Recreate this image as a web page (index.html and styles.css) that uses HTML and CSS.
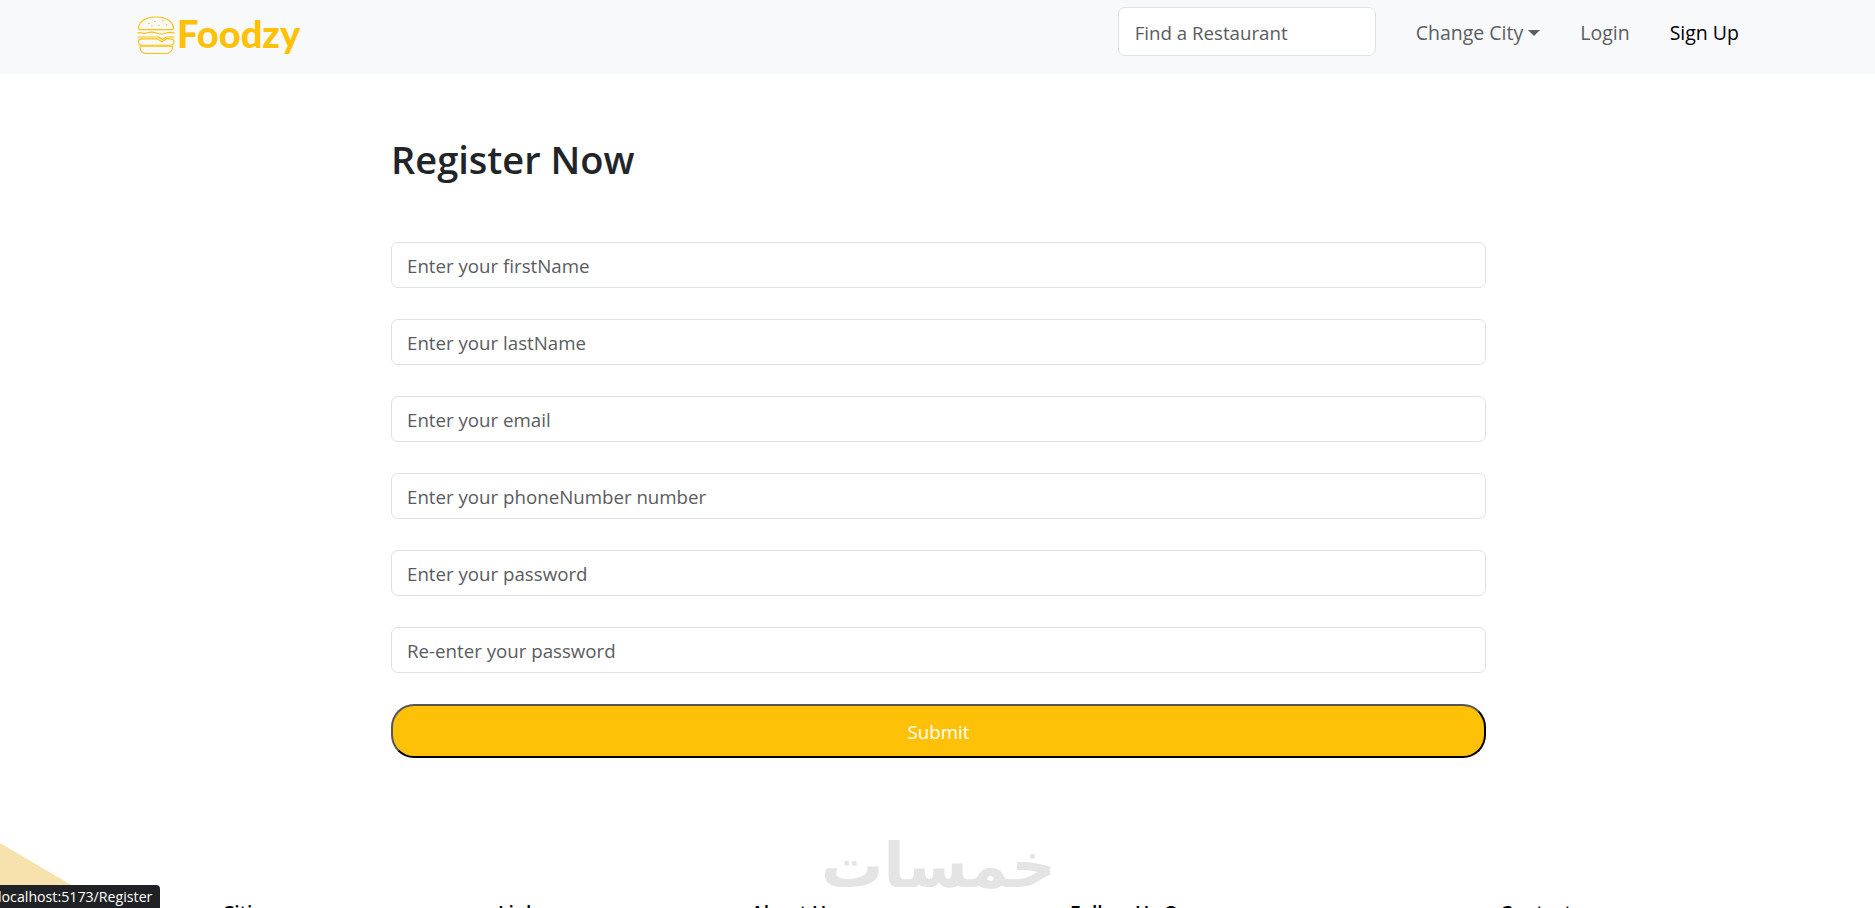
FILE: index.html
```html
<!DOCTYPE html>
<html lang="en">
<head>
<meta charset="utf-8">
<title>Foodzy</title>
<link rel="stylesheet" href="styles.css">
</head>
<body>
<header class="navbar">
  <a class="brand" href="#">
    <svg class="burger" viewBox="0 0 40 40" fill="none" stroke="#ffc107" stroke-width="1.2" stroke-linecap="round" stroke-linejoin="round">
      <path d="M1.500 12.500C2 5.500 9 1 19.500 1S37 5.500 37.500 12.500C37.500 13.500 37 14 36 14H3C2 14 1.500 13.500 1.500 12.500Z"/>
      <path d="M12 7.500h.6M18 5.500h.6M26 5h.6M15 10h.6M22 9.500h.6M30 9h.6"/>
      <path d="M1 17.500C4 16 6 19 10 17.500S16 16 20 17.500 26 19 30 17.500 35 16.500 38 17.500"/>
      <path d="M1 21.500H22L26 24 30 21.500H38"/>
      <path d="M5 23.500H21L25.500 26.500 30 23.500H34C36.500 23.500 38 25 38 26.500S36.500 30 34 30H5C2.500 30 1.500 28.500 1.500 26.500S2.500 23.500 5 23.500Z"/>
      <path d="M3 31H36.500V32C36.500 36 33 38.500 29 38.500H10C6 38.500 3 36 3 32Z"/>
    </svg>
    <span class="brand-name">Foodzy</span>
  </a>
  <nav class="nav-right">
    <input class="search" type="text" placeholder="Find a Restaurant">
    <ul class="nav-links">
      <li><a class="nav-link" href="#">Change City<span class="caret"></span></a></li>
      <li><a class="nav-link" href="#">Login</a></li>
      <li><a class="nav-link active" href="#">Sign Up</a></li>
    </ul>
  </nav>
</header>

<main class="register">
  <h1 class="title">Register Now</h1>
  <form class="form">
    <input class="field" type="text" placeholder="Enter your firstName">
    <input class="field" type="text" placeholder="Enter your lastName">
    <input class="field" type="email" placeholder="Enter your email">
    <input class="field" type="tel" placeholder="Enter your phoneNumber number">
    <input class="field" type="password" placeholder="Enter your password">
    <input class="field" type="password" placeholder="Re-enter your password">
    <button class="submit" type="button">Submit</button>
  </form>
</main>

<footer class="footer">
  <div class="footer-shape"></div>
  <div class="footer-cols">
    <h5 class="footer-title">Cities</h5>
    <h5 class="footer-title">Links</h5>
    <h5 class="footer-title">About Us</h5>
    <h5 class="footer-title">Follow Us On</h5>
    <h5 class="footer-title">Contact</h5>
  </div>
</footer>

<div class="watermark" lang="ar" dir="rtl">خمسات</div>
<div class="status">localhost:5173/Register</div>
</body>
</html>
```

FILE: styles.css
```css
* {
  box-sizing: border-box;
}

html,
body {
  margin: 0;
  height: 908px;
  overflow: hidden;
  background: #fff;
}

body {
  position: relative;
  font-family: "Open Sans", "Noto Sans", sans-serif;
  font-size: 18.700px;
  color: #212529;
}

.navbar {
  height: 74px;
  background: #f8f9fa;
  display: flex;
  align-items: center;
  justify-content: space-between;
  padding: 0 136px 0 137px;
}

.brand {
  display: flex;
  align-items: center;
  gap: 1px;
  text-decoration: none;
  margin-top: -3px;
}

.burger {
  width: 39px;
  height: 39px;
  flex: none;
}

.brand-name {
  margin-top: -6px;
  font-family: Lato, sans-serif;
  font-weight: 900;
  font-size: 38px;
  line-height: 1;
  color: #ffc107;
}

.nav-right {
  display: flex;
  align-items: center;
  margin-top: -11px;
}

.search {
  width: 258px;
  height: 49px;
  padding: 2px 16px 0;
  font: inherit;
  background: #fff;
  border: 1px solid #dee2e6;
  border-radius: 7px;
  outline: none;
}

.search::placeholder,
.field::placeholder {
  color: #595c5f;
  opacity: 1;
}

.nav-links {
  display: flex;
  list-style: none;
  margin: 2px 0 0 40px;
  padding: 0;
  gap: 40px;
  font-size: 19.500px;
}

.nav-link {
  display: inline-flex;
  align-items: center;
  color: #5c5e60;
  text-decoration: none;
}

.nav-link.active {
  color: #000;
}

.caret {
  width: 0;
  height: 0;
  margin-left: 5px;
  border-top: 6px solid #5c5e60;
  border-left: 6px solid transparent;
  border-right: 6px solid transparent;
}

.register {
  width: 1095px;
  margin-left: 391px;
}

.title {
  margin: 0;
  padding-top: 59px;
  height: 168px;
  font-size: 38px;
  font-weight: 600;
  line-height: 52px;
  color: #212529;
}

.form {
  display: flex;
  flex-direction: column;
  gap: 31px;
}

.field {
  width: 100%;
  height: 46px;
  padding: 0 15px;
  font: inherit;
  background: #fff;
  border: 1px solid #dee2e6;
  border-radius: 7px;
  outline: none;
}

.submit {
  height: 54px;
  font: inherit;
  color: #fff;
  background: #ffc107;
  border: 2px solid;
  border-color: #555 #000 #000 #555;
  border-radius: 23px;
}

.footer {
  position: relative;
  height: 151px;
}

.footer-shape {
  position: absolute;
  left: 0;
  top: 85px;
  width: 112px;
  height: 66px;
  background: #f7e2ae;
  clip-path: polygon(0 0, 100% 100%, 0 100%);
}

.footer-cols {
  display: grid;
  grid-template-columns: 276px 253px 319px 430px auto;
  padding: 143px 0 0 222px;
}

.footer-title {
  margin: 0;
  font-size: 19.200px;
  font-weight: 600;
  line-height: 24px;
  color: #000;
}

.watermark {
  position: absolute;
  left: 830px;
  top: 828px;
  width: 226px;
  text-align: center;
  font-family: "DejaVu Sans", sans-serif;
  font-weight: 700;
  font-size: 62px;
  line-height: 76px;
  color: #e4e4e4;
}

.status {
  position: absolute;
  left: -6px;
  bottom: 0;
  height: 23px;
  padding: 0 8px 0 4px;
  font-size: 14.200px;
  line-height: 24px;
  color: #fff;
  background: #202124;
  border-top-right-radius: 4px;
}
```
